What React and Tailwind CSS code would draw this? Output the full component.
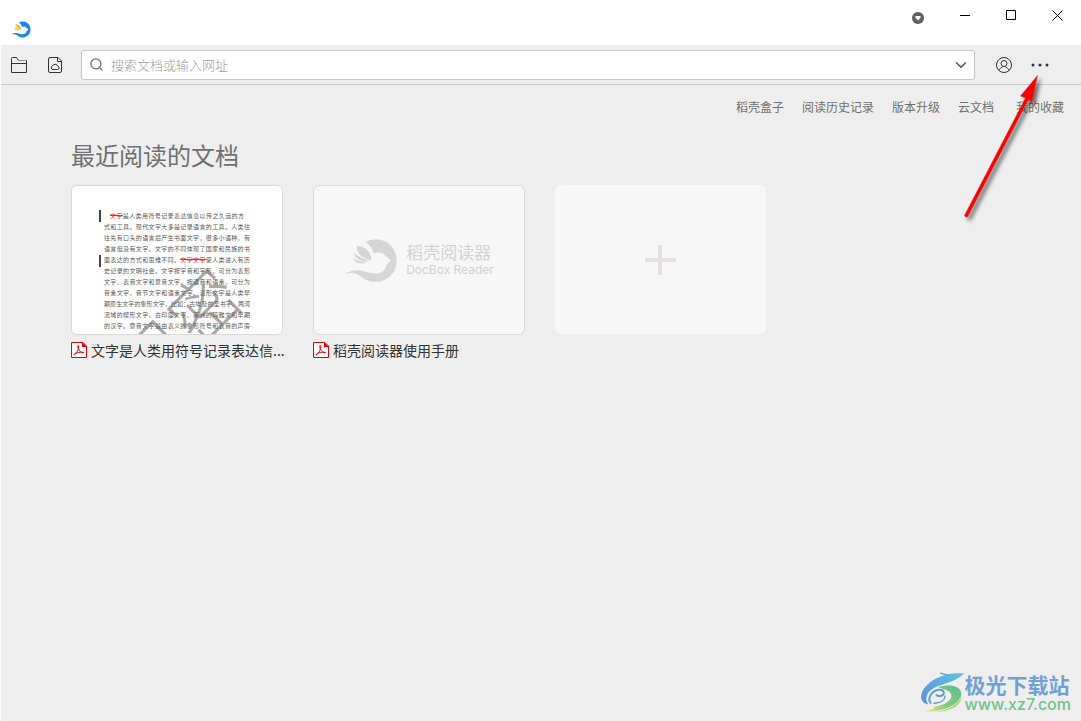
import { ChevronDown, Search } from "lucide-react";

const NAV_LINKS = ["稻壳盒子", "阅读历史记录", "版本升级", "云文档"];

const PAGE_LINES = [
  "式和工具。现代文字大多是记录语言的工具。人类往",
  "往先有口头的语言后产生书面文字，很多小语种，有",
  "语言但没有文字。文字的不同体现了国家和民族的书",
  "面表达的方式和思维不同。|文字文字|使人类进入有历",
  "史记录的文明社会。文字按字音和字形，可分为表形",
  "文字、表音文字和意音文字。按语音和语素，可分为",
  "音素文字、音节文字和语素文字。表形文字是人类早",
  "期原生文字的象形文字，比如：古埃及的圣书字、两河",
  "流域的楔形文字、古印度文字、美洲的玛雅文和早期",
  "的汉字。意音文字是由表义的象形符号和表音的声旁",
];

// ── Logos & icons ────────────────────────────────────────────────────────────
const DocBoxLogo = ({ className, body, petals }) => (
  <svg viewBox="133 174 162 134" className={className} aria-hidden="true">
    <path
      fill={body}
      d="M197 186C208 179 220 177 230 177C266 178 291 206 291 241C291 278 263 305 228 305C205 305 192 296 182 288C170 278 152 277 135 281C150 271 168 268 184 271C200 275 214 281 232 280C250 278 259 268 259 256C262 250 270 245 274 240C268 236 262 232 257 227C250 216 238 216 229 218L221 221C220 207 212 194 197 186Z"
    />
    <g fill={petals}>
      <path d="M171 197C196 198 217 218 215 241C196 238 170 224 171 197Z" />
      <path d="M163 217C174 230 194 236 209 243C192 247 163 239 163 217Z" />
      <path d="M160 235C172 242 188 245 203 247C189 253 167 252 160 235Z" />
    </g>
  </svg>
);

const FolderIcon = () => (
  <svg width="16" height="16" viewBox="0 0 16 16" fill="none" stroke="#333333">
    <path d="M.5 15.5V1.5a1 1 0 0 1 1-1H5.5L7.5 3.5H15.5V15.5ZM.5 6.5H15.5" />
    <path stroke="#999999" d="M7.5 3.5H15.5" />
  </svg>
);

const CloudDocIcon = () => (
  <svg width="14" height="16" viewBox="0 0 14 16" fill="none" stroke="#333333">
    <path d="M2 .5H10L13.5 4V14a1.5 1.5 0 0 1-1.5 1.5H2A1.5 1.5 0 0 1 .5 14V2A1.5 1.5 0 0 1 2 .5ZM9.5 .5V4.5H13.5" />
    <path d="M5 12.5H9.6a1.7 1.7 0 0 0 .3-3.3 3 3 0 0 0-5.5-.2A1.8 1.8 0 0 0 5 12.5Z" />
  </svg>
);

const UserIcon = () => (
  <svg width="16" height="16" viewBox="0 0 16 16" fill="none" stroke="#333333">
    <circle cx="8" cy="8" r="7.5" />
    <circle cx="8" cy="6.5" r="3" />
    <path d="M2.8 13.2C4 11.4 5 10.8 6.2 10.3L7 9.2M13.2 13.2C12 11.4 11 10.8 9.8 10.3L9 9.2" />
  </svg>
);

const PdfIcon = () => (
  <svg width="16" height="16" viewBox="0 0 16 16" className="shrink-0" aria-hidden="true">
    <path fill="#ffffff" stroke="#ee0000" d="M.5 .5H12L15.5 4V15.5H.5Z" />
    <path fill="#ee0000" d="M11 0L16 5H11Z" />
    <path
      fill="none"
      stroke="#ee0000"
      d="M7.2 3.2C8.4 3.4 7.6 6 7.2 7.4C6.4 10 4.6 12.2 3 13C3.4 11 8 9.6 12.6 10.6C10.6 10.8 8 9 7 6.2C6.7 5 6.6 3.6 7.2 3.2Z"
    />
  </svg>
);

const SiteLogo = () => (
  <svg viewBox="63 60 136 126" className="w-[45px] h-[42px]" aria-hidden="true">
    <defs>
      <linearGradient id="swirlBlue" x1="1" y1="0" x2="0" y2="1">
        <stop offset="0" stopColor="#62c4e6" />
        <stop offset="1" stopColor="#5b8fd2" />
      </linearGradient>
      <linearGradient id="swirlGreen" x1="1" y1="0" x2="0" y2="1">
        <stop offset="0" stopColor="#5cc08c" />
        <stop offset=".6" stopColor="#84ca7c" />
        <stop offset="1" stopColor="#f2ea6c" />
      </linearGradient>
    </defs>
    <path fill="url(#swirlBlue)" d="M197 67C140 61 86 86 69 124C61 146 72 158 88 161C76 142 83 124 106 110C138 96 170 92 197 67Z" />
    <path fill="none" stroke="#5b9fd6" strokeWidth="6" d="M96 158C84 142 98 118 120 116C138 115 140 132 124 135C118 136 113 134 112 130" />
    <path fill="none" stroke="#5b9fd6" strokeWidth="4" d="M104 157C126 158 138 148 139 134M124 66L150 73" />
    <path fill="url(#swirlGreen)" d="M118 108C152 98 187 104 188 128C186 160 134 184 75 182C98 178 112 170 104 168C134 164 160 150 158 132C155 118 136 116 118 108Z" />
    <path fill="#a9d76f" d="M105 183C150 180 184 156 188 134C192 166 146 184 105 183Z" />
  </svg>
);

const Arrow = () => (
  <svg
    width="90"
    height="156"
    viewBox="960 72 90 156"
    className="absolute top-[72px] right-[31px] pointer-events-none"
    aria-hidden="true"
  >
    <defs>
      <filter id="arrowShadow" x="-20%" y="-20%" width="150%" height="150%">
        <feDropShadow dx="3" dy="3" stdDeviation="2" floodColor="#000000" floodOpacity=".6" />
      </filter>
    </defs>
    <g filter="url(#arrowShadow)">
      <path
        fill="#ff0000"
        stroke="#b04040"
        strokeWidth=".5"
        d="M1037.5 75.5L1020.5 96L1025.5 98L964.5 215.5Q965.5 218 967.5 217L1028.5 99.5L1032 102Z"
      />
    </g>
  </svg>
);

// ── Window chrome ────────────────────────────────────────────────────────────
const TitleBar = () => (
  <header className="h-[45px] flex items-start justify-between bg-white">
    <DocBoxLogo className="w-5 h-[17px] ml-2.5 mt-[21px]" body="#1486fa" petals="#e9b949" />
    <div className="flex items-center h-[30px] mr-px">
      <button aria-label="菜单" className="w-[46px] h-full flex items-center justify-center pt-1.5 mr-px">
        <svg width="12" height="12" viewBox="0 0 12 12">
          <circle cx="6" cy="6" r="6" fill="#5f5f5f" />
          <path fill="#ffffff" d="M3.5 4H8.5V6L6 8.5L3.5 6Z" />
        </svg>
      </button>
      <button aria-label="最小化" className="w-[46px] h-full flex items-center justify-center">
        <svg width="11" height="11"><path d="M0 5.5H10" stroke="#000000" /></svg>
      </button>
      <button aria-label="最大化" className="w-[46px] h-full flex items-center justify-center">
        <svg width="11" height="11"><path d="M.5 .5H9.5V9.5H.5Z" fill="none" stroke="#000000" /></svg>
      </button>
      <button aria-label="关闭" className="w-[46px] h-full flex items-center justify-center">
        <svg width="11" height="11"><path d="M.5 .5L10.5 10.5M10.5 .5L.5 10.5" stroke="#000000" /></svg>
      </button>
    </div>
  </header>
);

const Toolbar = () => (
  <div className="h-10 flex items-center pl-2.5 pr-8 border-b border-[#c8c8c8]">
    <button aria-label="打开文件" className="w-4 flex justify-center"><FolderIcon /></button>
    <button aria-label="云文档" className="w-4 ml-5 flex justify-center"><CloudDocIcon /></button>
    <label className="flex-1 flex items-center h-[30px] ml-[18px] pl-[7px] pr-1 bg-white border border-[#c8c8c8] rounded-[3px]">
      <Search size={15} strokeWidth={2} color="#666666" />
      <input
        type="text"
        aria-label="搜索"
        placeholder="搜索文档或输入网址"
        className="flex-1 min-w-0 ml-[7px] text-[13px] font-light outline-none placeholder-[#a0a0a0]"
      />
      <ChevronDown size={18} strokeWidth={2} color="#555555" />
    </label>
    <button aria-label="账户" className="ml-[21px]"><UserIcon /></button>
    <button aria-label="更多" className="ml-[19px]">
      <svg width="18" height="4" fill="#333333">
        <circle cx="2" cy="2" r="1.5" />
        <circle cx="9" cy="2" r="1.5" />
        <circle cx="16" cy="2" r="1.5" />
      </svg>
    </button>
  </div>
);

// ── Recent documents ─────────────────────────────────────────────────────────
const PageLine = ({ text }) => {
  const [before, marked, after] = text.split("|");
  return (
    <p>
      {before}
      {marked && <span className="text-[#ff2020] line-through">{marked}</span>}
      {after}
    </p>
  );
};

const PagePreview = () => (
  <div className="relative h-full overflow-hidden px-8 pt-6 text-[6px] leading-[11px] text-[#555555] whitespace-nowrap [text-align-last:justify]">
    <p className="px-1.5">
      <span className="text-[#ff2020] line-through">文字</span>
      是人类用符号记录表达信息以传之久远的方
    </p>
    {PAGE_LINES.map(line => <PageLine key={line} text={line} />)}
    <span className="absolute left-[27px] top-6 w-0.5 h-3 bg-[#444444]" />
    <span className="absolute left-[27px] top-[69px] w-0.5 h-3 bg-[#444444]" />
    <span className="absolute left-[38px] top-[108px] -rotate-45 text-[68px] leading-[68px] font-light text-[#707070] opacity-60">
      机密
    </span>
  </div>
);

const DocCard = ({ title, className, children }) => (
  <a href="#" className="block w-[212px]">
    <div className={`h-[150px] border border-[#dadada] rounded-md overflow-hidden ${className}`}>
      {children}
    </div>
    <div className="flex items-center gap-1 h-[30px] text-sm text-[#333333] whitespace-nowrap">
      <PdfIcon />
      {title}
    </div>
  </a>
);

export default function App() {
  return (
    <div className="relative min-h-screen flex flex-col bg-[#eeeeee] border-l border-white font-['Noto_Sans_CJK_SC',sans-serif]">
      <TitleBar />
      <Toolbar />

      <nav className="flex justify-end gap-[22px] pr-[17px] pt-3 text-xs leading-5 text-[#707070]">
        <div className="flex gap-[18px]">
          {NAV_LINKS.map(link => <a key={link} href="#">{link}</a>)}
        </div>
        <a href="#">我的收藏</a>
      </nav>

      <main className="flex-1 px-[70px] pt-5">
        <h1 className="text-2xl leading-9 text-[#707070]">最近阅读的文档</h1>
        <div className="flex flex-wrap gap-[30px] mt-3">
          <DocCard title="文字是人类用符号记录表达信..." className="bg-white">
            <PagePreview />
          </DocCard>
          <DocCard title="稻壳阅读器使用手册" className="bg-[#f7f7f7]">
            <div className="h-full flex items-center justify-center gap-2">
              <DocBoxLogo className="w-[54px] h-[45px]" body="#d6d6d6" petals="#d6d6d6" />
              <div className="text-[#d2d2d2]">
                <p className="text-[17px] leading-5">稻壳阅读器</p>
                <p className="font-['Inter',sans-serif] text-xs leading-4">DocBox Reader</p>
              </div>
            </div>
          </DocCard>
          <button aria-label="添加文档" className="w-[211px] h-[149px] flex items-center justify-center bg-[#f7f7f7] rounded-md">
            <svg width="31" height="30"><path d="M0 15H31M15 0V30" stroke="#e4e0e0" strokeWidth="4" /></svg>
          </button>
        </div>
      </main>

      <Arrow />

      <div className="absolute right-2.5 bottom-2 flex items-center">
        <SiteLogo />
        <div>
          <p className="text-[21px] leading-6 font-bold text-[#6fa1d6]">极光下载站</p>
          <p className="font-['Inter',sans-serif] text-base leading-4 font-medium text-[#6cc58a]">www.xz7.com</p>
        </div>
      </div>
    </div>
  );
}
